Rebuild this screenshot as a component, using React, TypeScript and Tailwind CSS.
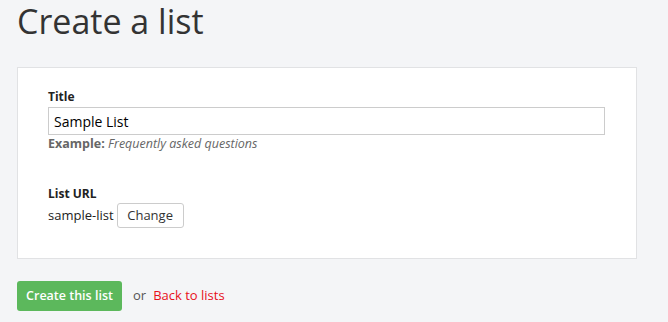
import type { FunctionComponent } from "react";

const App: FunctionComponent = () => {
  return (
    <div className="min-h-screen bg-[#f4f5f7] pl-[17px] pt-[1px] font-['Open_Sans',sans-serif] text-[#333]">
      {/* Heading */}
      <h1 className="text-[34px] leading-[40px] text-[#333]">Create a list</h1>

      {/* Form card */}
      <div className="mt-[26px] w-[620px] bg-white border border-[#e1e2e4] pt-[20px] pb-[30px] px-[30px]">
        <div>
          <label className="block text-[12px] leading-[17px] font-bold text-[#222] mb-[2px]">Title</label>
          <input
            readOnly
            value="Sample List"
            className="block w-[557px] h-[28px] border border-[#cccccc] px-[5px] text-[14px] font-medium text-black outline-none"
          />
          <div className="text-[12.5px] leading-[17px] text-[#666]">
            <span className="font-bold">Example:</span> <em>Frequently asked questions</em>
          </div>
        </div>

        <div className="mt-[33px]">
          <div className="text-[12px] leading-[17px] font-bold text-[#222] mb-[1px]">List URL</div>
          <div className="flex items-center gap-[3px] text-[13px] text-[#222]">
            <span>sample-list</span>
            <button className="h-[25px] w-[67px] border border-[#ccc] rounded-[3px] bg-white text-[13px] text-[#333]">
              Change
            </button>
          </div>
        </div>
      </div>

      {/* Actions */}
      <div className="mt-[22px] flex items-center text-[13px]">
        <button className="h-[30px] w-[105px] rounded-[3px] bg-[#5cb85c] text-white text-[12.5px] font-semibold">
          Create this list
        </button>
        <span className="ml-[11px] text-[#555]">or</span>
        <a href="#" className="ml-[7px] text-[#e8101a]">Back to lists</a>
      </div>
    </div>
  );
};

export default App;
